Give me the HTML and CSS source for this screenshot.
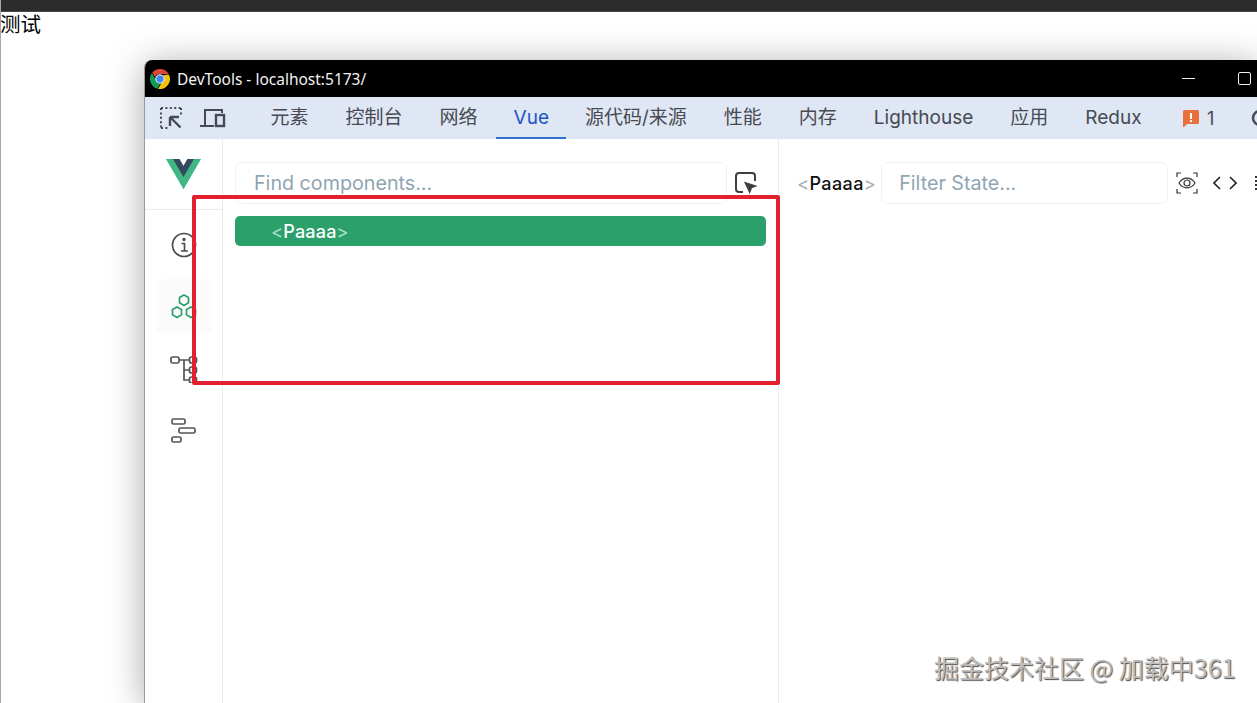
FILE: index.html
```html
<!DOCTYPE html>
<html lang="zh">
<head>
<meta charset="utf-8">
<title>DevTools</title>
<link rel="stylesheet" href="styles.css">
</head>
<body>
<div class="topbar"></div>
<div class="page-text">测试</div>

<section class="window">
  <header class="titlebar">
    <svg class="chrome" viewBox="0 0 20 20" width="20" height="20">
      <path d="M10 0a10 10 0 0 1 8.66 5H10a5 5 0 0 0-4.7 3.3L2.2 3.6A10 10 0 0 1 10 0z" fill="#db4437"/>
      <path d="M1.9 4.1l4.4 7.4A5 5 0 0 0 10 15l-2.6 4.7A10 10 0 0 1 1.9 4.1z" fill="#0f9d58"/>
      <path d="M18.8 5.5A10 10 0 0 1 8 19.9l4.3-7.4A5 5 0 0 0 13.2 6z" fill="#f4c20d"/>
      <circle cx="10" cy="10" r="4.2" fill="#4285f4" stroke="#fff" stroke-width="1"/>
    </svg>
    <span class="title">DevTools - localhost:5173/</span>
    <span class="win-controls">
      <span class="win-min"></span>
      <span class="win-max"></span>
    </span>
  </header>

  <nav class="tabbar">
    <span class="tool-icons">
      <svg viewBox="0 0 24 24" width="24" height="24" fill="none" stroke="#474a52" stroke-width="2">
        <path d="M2 2h20M2 2v20M2 22h7M22 2v7" stroke-dasharray="2 2.4"/>
        <path d="M11 11h9M11 11v9M11.500 11.500l10 10" stroke-width="2.400"/>
      </svg>
      <svg viewBox="0 0 26 20" width="26" height="20" fill="none" stroke="#474a52" stroke-width="2">
        <path d="M5 17V2h17v3M0 18h14" />
        <rect x="16" y="7" width="8" height="11" stroke-width="2.400"/>
      </svg>
    </span>
    <span class="tab tab-cjk">元素</span>
    <span class="tab tab-cjk">控制台</span>
    <span class="tab tab-cjk">网络</span>
    <span class="tab tab-active">Vue</span>
    <span class="tab tab-cjk">源代码/来源</span>
    <span class="tab tab-cjk">性能</span>
    <span class="tab tab-cjk">内存</span>
    <span class="tab">Lighthouse</span>
    <span class="tab tab-cjk">应用</span>
    <span class="tab">Redux</span>
    <span class="issues">
      <svg viewBox="0 0 16 17" width="16" height="17">
        <path d="M0 1.500A1.500 1.500 0 0 1 1.500 0h13A1.500 1.500 0 0 1 16 1.500v11a1.500 1.500 0 0 1-1.500 1.500H4l-3 3H0z" fill="#e8703a"/>
        <path d="M7 3h2v6H7zM7 10h2v2H7z" fill="#fff"/>
      </svg>
      <span>1</span>
    </span>
    <svg class="gear" viewBox="0 0 20 22" width="20" height="22" fill="none" stroke="#474a52" stroke-width="2.500">
      <circle cx="10" cy="11" r="7"/>
    </svg>
  </nav>

  <div class="content">
    <aside class="sidebar">
      <div class="logo-row">
        <svg viewBox="0 0 256 221" width="35" height="30">
          <path d="M204.800 0H256L128 220.800 0 0h97.920L128 51.200 157.440 0z" fill="#41b883"/>
          <path d="M0 0l128 220.800L256 0h-51.200L128 132.480 50.560 0z" fill="#41b883"/>
          <path d="M50.560 0L128 133.120 204.800 0h-47.360L128 51.200 97.920 0z" fill="#35495e"/>
        </svg>
      </div>
      <div class="side-items">
        <div class="side-item">
          <svg viewBox="0 0 26 26" width="26" height="26" fill="none" stroke="#4b4b4b" stroke-width="1.700">
            <circle cx="13" cy="13" r="11.500"/>
            <path d="M10.500 11.500H13.500V19M10 19h7"/>
            <circle cx="13" cy="7.500" r="0.800" fill="#4b4b4b"/>
          </svg>
        </div>
        <div class="side-item side-item-active">
          <svg viewBox="0 0 26 26" width="26" height="26" fill="none" stroke="#2ca06c" stroke-width="1.700">
            <path d="M13 1l4.500 2.600v5.200L13 11.400 8.500 8.800V3.600z"/>
            <path d="M6 13l4.500 2.600v5.200L6 23.400l-4.500-2.600v-5.200z"/>
            <path d="M20 13l4.500 2.600v5.200L20 23.400l-4.500-2.600v-5.200z"/>
          </svg>
        </div>
        <div class="side-item">
          <svg viewBox="0 0 28 28" width="28" height="28" fill="none" stroke="#555" stroke-width="1.700">
            <rect x="1" y="2" width="8" height="6" rx="1.500"/>
            <rect x="19.500" y="2" width="7" height="6" rx="2"/>
            <rect x="19.500" y="12" width="7" height="6" rx="2"/>
            <rect x="19.500" y="22" width="7" height="6" rx="2"/>
            <path d="M9 5h10.500M14 5v20h5.500M14 15h5.500"/>
          </svg>
        </div>
        <div class="side-item">
          <svg viewBox="0 0 26 26" width="26" height="26" fill="none" stroke="#555" stroke-width="1.700">
            <rect x="1" y="1" width="13" height="5" rx="1.500"/>
            <rect x="8" y="10" width="16" height="5" rx="1.500"/>
            <rect x="1" y="19" width="9" height="5" rx="1.500"/>
          </svg>
        </div>
      </div>
    </aside>

    <main class="tree-pane">
      <div class="search-row">
        <div class="field field-tree">Find components...</div>
        <svg viewBox="0 0 22 22" width="22" height="22" fill="none" stroke="#3f3f3f" stroke-width="2">
          <path d="M8 20H4a3 3 0 0 1-3-3V4a3 3 0 0 1 3-3h13a3 3 0 0 1 3 3v5"/>
          <path d="M10 10.500l11 3.500-4.500 1.800-1.800 4.700z" fill="#3f3f3f" stroke-width="1.200"/>
        </svg>
      </div>
      <div class="tree-row"><span class="bracket">&lt;</span>Paaaa<span class="bracket">&gt;</span></div>
    </main>

    <section class="state-pane">
      <div class="state-name"><span class="bracket-dim">&lt;</span>Paaaa<span class="bracket-dim">&gt;</span></div>
      <div class="field field-state">Filter State...</div>
      <svg class="eye" viewBox="0 0 22 22" width="22" height="22" fill="none" stroke="#333" stroke-width="1.200">
        <path d="M1 5V1h4M17 1h4v4M21 17v4h-4M5 21H1v-4"/>
        <path d="M3 11c4-6.500 12-6.500 16 0-4 6.500-12 6.500-16 0z"/>
        <circle cx="11" cy="11" r="3"/>
      </svg>
      <svg class="code" viewBox="0 0 24 14" width="24" height="14" fill="none" stroke="#222" stroke-width="1.600">
        <path d="M7 1L1 7l6 6M17 1l6 6-6 6"/>
      </svg>
      <span class="more"></span>
    </section>
  </div>
</section>

<div class="highlight-box"></div>
<div class="watermark">掘金技术社区 @ 加载中361</div>
</body>
</html>
```
FILE: styles.css
```css
* { box-sizing: border-box; }

html, body {
  margin: 0;
  height: 100%;
  overflow: hidden;
  background: #fff;
}

body {
  position: relative;
  border-left: 1px solid #a8a8a8;
  font-family: "Inter", "Noto Sans CJK SC", sans-serif;
}

.topbar {
  height: 12px;
  background: #2c2c2c;
  border-bottom: 1px solid #4a4a4a;
}

.page-text {
  margin-left: -1px;
  font-family: "Noto Sans CJK SC", sans-serif;
  font-size: 20.500px;
  line-height: 22px;
  color: #000;
}

.window {
  position: absolute;
  left: 143px;
  top: 60px;
  width: 1113px;
  height: 643px;
  display: flex;
  flex-direction: column;
  background: #fff;
  border-left: 1px solid #9a9a9a;
  border-top-left-radius: 8px;
  box-shadow: 0 4px 36px rgba(0, 0, 0, 0.34);
  overflow: hidden;
}

.titlebar {
  height: 37px;
  flex: none;
  display: flex;
  align-items: center;
  padding-left: 5px;
  background: #000;
  color: #f2f2f2;
  font-size: 15.500px;
}

.chrome { flex: none; }

.title {
  margin-left: 7px;
  font-family: "Noto Sans", sans-serif;
  white-space: nowrap;
}

.win-controls {
  display: flex;
  flex: none;
  align-items: center;
  gap: 43px;
  margin-left: 816px;
}

.win-min {
  width: 13px;
  height: 1px;
  background: #eee;
}

.win-max {
  width: 13px;
  height: 13px;
  border: 1px solid #eee;
  border-radius: 2px;
}

.tabbar {
  height: 42px;
  flex: none;
  display: flex;
  align-items: stretch;
  background: #dfe6f4;
  color: #474a52;
  font-size: 19px;
}

.tool-icons {
  flex: none;
  width: 107px;
  padding-left: 14px;
  display: flex;
  align-items: center;
  gap: 17px;
}

.tab {
  flex: none;
  padding: 0 18.500px;
  display: flex;
  align-items: center;
  white-space: nowrap;
  border-bottom: 1px solid transparent;
}

.tab-cjk { padding-bottom: 4px; }

.tab-active {
  padding: 0 17.500px;
  color: #1a56c4;
  border-bottom: 2px solid #2f6fd0;
}

.issues {
  flex: none;
  margin-left: 23px;
  display: flex;
  align-items: center;
  gap: 8px;
  font-size: 18px;
}

.gear {
  align-self: center;
  margin-left: 36px;
  flex: none;
}

.content {
  flex: 1;
  display: flex;
  min-height: 0;
}

.sidebar {
  width: 78px;
  flex: none;
  border-right: 1px solid #ececec;
}

.logo-row {
  height: 71px;
  display: flex;
  align-items: center;
  justify-content: center;
  padding-bottom: 1px;
  border-bottom: 1px solid #ececec;
}

.side-items {
  padding-top: 7px;
  display: flex;
  flex-direction: column;
  align-items: center;
  gap: 6px;
}

.side-item {
  width: 56px;
  height: 56px;
  display: flex;
  align-items: center;
  justify-content: center;
  border-radius: 8px;
}

.side-item-active { background: #fbfbfb; }

.tree-pane {
  width: 556px;
  flex: none;
  padding: 23px 12px 0;
  border-right: 1px solid #ececec;
}

.search-row {
  display: flex;
  align-items: center;
  gap: 8px;
}

.field {
  height: 42px;
  display: flex;
  align-items: center;
  padding-left: 18px;
  border: 1px solid #eef1f3;
  border-radius: 7px;
  color: #8fa5b2;
  font-size: 19.700px;
}

.field-tree { width: 492px; flex: none; }
.field-state { width: 287px; margin-left: 5px; padding-left: 17px; flex: none; }

.tree-row {
  height: 30px;
  margin-top: 12px;
  padding-left: 36px;
  display: flex;
  align-items: center;
  background: #2ba06b;
  border-radius: 5px;
  color: #fff;
  font-size: 18px;
  font-weight: 500;
  letter-spacing: 0.200px;
}

.bracket { color: #a4dbc0; }
.bracket-dim { color: #a9b4b9; }

.state-pane {
  flex: 1;
  height: 88px;
  padding: 23px 0 0 18px;
  display: flex;
  align-items: flex-start;
}

.state-name {
  height: 42px;
  display: flex;
  align-items: center;
  color: #111;
  font-size: 18px;
  font-weight: 500;
  letter-spacing: 0.400px;
}

.eye { margin: 10px 0 0 8px; flex: none; }
.code { margin: 14px 0 0 15px; flex: none; }

.more {
  flex: none;
  width: 2px;
  height: 14px;
  margin: 14px 0 0 18px;
  border-left: 2px dotted #333;
}

.highlight-box {
  position: absolute;
  left: 191px;
  top: 195px;
  width: 588px;
  height: 190px;
  border: 4px solid #e3202e;
  border-radius: 2px;
}

.watermark {
  position: absolute;
  left: 933px;
  top: 652px;
  font-family: "Noto Sans CJK SC", sans-serif;
  font-size: 25px;
  line-height: 30px;
  white-space: nowrap;
  color: #bdbdbd;
  text-shadow: 1px 1px 1px #4d4d4d;
}
```
